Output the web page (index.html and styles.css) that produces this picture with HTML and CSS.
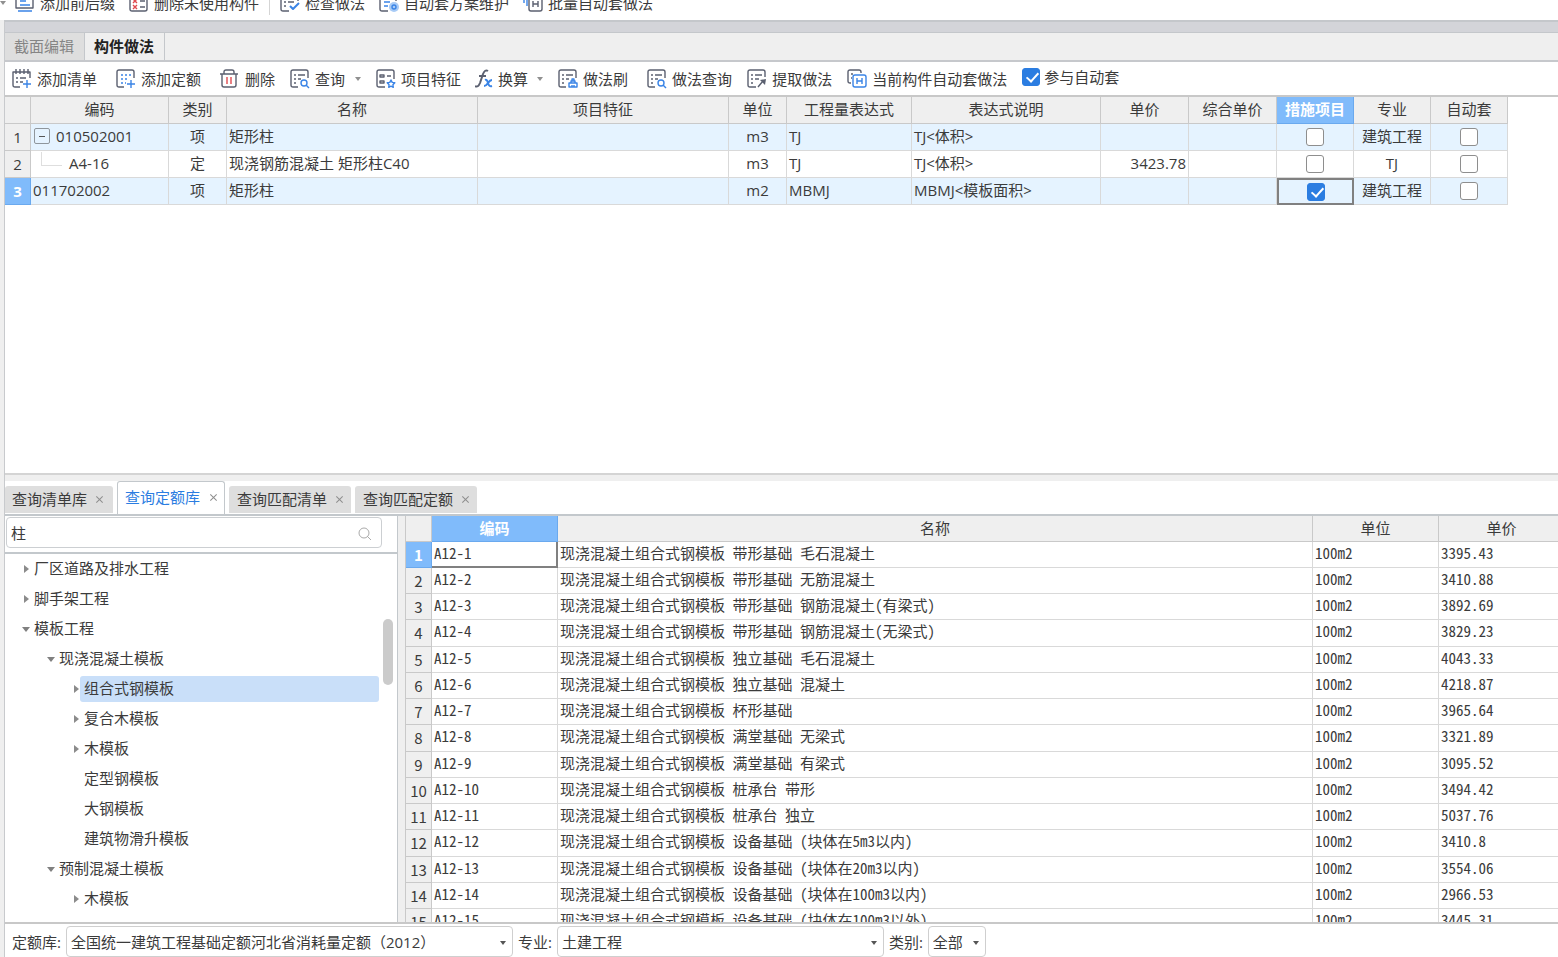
FILE: index.html
```html
<!DOCTYPE html>
<html lang="zh-CN">
<head>
<meta charset="utf-8">
<meta name="viewport" content="width=device-width, initial-scale=1">
<title>构件做法</title>
<link rel="stylesheet" href="styles.css">
</head>
<body>
<svg class="sprite" aria-hidden="true">
  <symbol id="i-list-add" viewBox="0 0 20 20"><path class="k" d="M8 18H3q-2 0-2-2V3h17v6M4 0v5M8 0v5M12 0v5M16 0v5M4 9h2M8 9h6M4 13h2M8 13h3"/><path class="b" d="M15 11v8M11 15h8"/></symbol>
  <symbol id="i-quota-add" viewBox="0 0 20 20"><path class="k" d="M8 18H3q-2 0-2-2V3q0-2 2-2h13q2 0 2 2v6"/><path class="b dots" d="M5 6h10M5 10h8M5 14h5"/><path class="b" d="M15 11v8M11 15h8"/></symbol>
  <symbol id="i-trash" viewBox="0 0 20 20"><path class="k" d="M0 5h18M4 5V3q0-2 2-2h6q2 0 2 2v2M2 5v11q0 2 2 2h10q2 0 2-2V5"/><path class="r" d="M7 8v7M11 8v7"/></symbol>
  <symbol id="i-query" viewBox="0 0 20 20"><path class="k" d="M8 18H3q-2 0-2-2V3q0-2 2-2h13q2 0 2 2v6M4 6h2M8 6h7M4 10h2M8 10h3M4 14h2"/><circle class="b" cx="14" cy="14" r="3"/><path class="b" d="m16 16 3 3"/></symbol>
  <symbol id="i-feature" viewBox="0 0 20 20"><path class="k" d="M9 18H3q-2 0-2-2V3q0-2 2-2h13q2 0 2 2v7M4 6h4v2H4zM4 12h4v2H4zM11 7h4"/><path class="b" d="m15 11 1.200 2.400 2.600.4-1.900 1.900.4 2.600-2.300-1.200-2.300 1.200.4-2.600-1.900-1.900 2.600-.4z"/></symbol>
  <symbol id="i-fx" viewBox="0 0 20 20"><path class="k thick" d="M0 17q3 2 5-3l3-9q2-5 5-3M4 7h7"/><path class="b thick" d="M10 11q2-1 3 3t4 3M17 11q-2 0-4 3t-4 3"/></symbol>
  <symbol id="i-brush" viewBox="0 0 20 20"><path class="k" d="M8 18H3q-2 0-2-2V3q0-2 2-2h13q2 0 2 2v6M4 6h2M8 6h7M4 10h2M8 10h3M4 14h2"/><path class="b" d="M11 18v-4h8v4zM13 14v-2h4v2M14 12v-2h2v2M14 18v-2M16 18v-2"/></symbol>
  <symbol id="i-extract" viewBox="0 0 20 20"><path class="k" d="M9 18H3q-2 0-2-2V3q0-2 2-2h13q2 0 2 2v5M4 6h2M8 6h7M4 10h2M8 10h4M4 14h2M11 18l5-6"/><path class="kf" d="m13 11 6-1-1 6z"/></symbol>
  <symbol id="i-auto" viewBox="0 0 20 20"><path class="k" d="M4 14H3q-2 0-2-2V3q0-2 2-2h9q2 0 2 2v1M4 5h2M4 9h1"/><rect class="b" x="6" y="6" width="13" height="12" rx="2"/><path class="b" d="M10 9v6M15 9v6M10 12h5"/></symbol>
  <symbol id="i-prefix" viewBox="0 0 20 20"><path class="k" d="M1 1h17v14H1z"/><path class="b" d="M5 8h6M5 12h10M3 18h14"/></symbol>
  <symbol id="i-unused" viewBox="0 0 20 20"><path class="k" d="M3 1h13q2 0 2 2v13q0 2-2 2H3q-2 0-2-2V1M11 8h5M11 14h5"/><path class="r" d="m4 6 4 4m0-4-4 4M4 12l4 4m0-4-4 4"/></symbol>
  <symbol id="i-check" viewBox="0 0 20 20"><path class="k" d="M9 18H3q-2 0-2-2V1h17v7M4 9h2M8 9h6M4 13h2"/><path class="b thick" d="m10 13 3 3 6-6"/></symbol>
  <symbol id="i-scheme" viewBox="0 0 20 20"><path class="k" d="M9 18H3q-2 0-2-2V1h16v7"/><path class="b" d="M5 6h8M5 9h6M5 13h4"/><circle class="bf" cx="15" cy="14" r="5"/><circle class="b" cx="15" cy="14" r="2"/></symbol>
  <symbol id="i-batch" viewBox="0 0 20 20"><path class="b" d="M1 1v9M4 1v12"/><rect class="k" x="6" y="4" width="13" height="14" rx="2"/><path class="k" d="M10 8v6M15 8v6M10 11h5"/></symbol>
</svg>

<div class="app">
  <header class="ribbon">
    <i class="caret"></i>
    <button class="tool"><svg><use href="#i-prefix"/></svg>添加前后缀</button>
    <button class="tool"><svg><use href="#i-unused"/></svg>删除未使用构件</button>
    <i class="divider"></i>
    <button class="tool"><svg><use href="#i-check"/></svg>检查做法</button>
    <button class="tool"><svg><use href="#i-scheme"/></svg>自动套方案维护</button>
    <button class="tool"><svg><use href="#i-batch"/></svg>批量自动套做法</button>
  </header>

  <main class="workspace">
    <div class="band"></div>
    <nav class="view-tabs">
      <button class="view-tab">截面编辑</button>
      <button class="view-tab active">构件做法</button>
    </nav>
    <div class="toolbar">
      <button class="tool roomy"><svg><use href="#i-list-add"/></svg>添加清单</button>
      <button class="tool roomy"><svg><use href="#i-quota-add"/></svg>添加定额</button>
      <button class="tool"><svg><use href="#i-trash"/></svg>删除</button>
      <button class="tool"><svg><use href="#i-query"/></svg>查询<i class="caret"></i></button>
      <button class="tool"><svg><use href="#i-feature"/></svg>项目特征</button>
      <button class="tool fx"><svg><use href="#i-fx"/></svg>换算<i class="caret"></i></button>
      <button class="tool roomy"><svg><use href="#i-brush"/></svg>做法刷</button>
      <button class="tool"><svg><use href="#i-query"/></svg>做法查询</button>
      <button class="tool"><svg><use href="#i-extract"/></svg>提取做法</button>
      <button class="tool"><svg><use href="#i-auto"/></svg>当前构件自动套做法</button>
      <label class="join"><input type="checkbox" class="check" checked>参与自动套</label>
    </div>

    <section class="items">
      <table class="grid items-grid">
        <colgroup><col class="w-no"><col class="w-code"><col class="w-kind"><col class="w-name"><col class="w-name"><col class="w-kind"><col class="w-expr"><col class="w-desc"><col class="w-price"><col class="w-price"><col class="w-flag"><col class="w-flag"><col class="w-flag"></colgroup>
        <thead><tr><th></th><th>编码</th><th>类别</th><th>名称</th><th>项目特征</th><th>单位</th><th>工程量表达式</th><th>表达式说明</th><th>单价</th><th>综合单价</th><th class="hot">措施项目</th><th>专业</th><th>自动套</th></tr></thead>
        <tbody>
          <tr class="tint"><th>1</th><td><div class="node"><button class="fold" aria-label="折叠"></button>010502001</div></td><td class="mid">项</td><td>矩形柱</td><td></td><td class="mid">m3</td><td>TJ</td><td>TJ&lt;体积&gt;</td><td></td><td></td><td class="mid"><input type="checkbox" class="check" aria-label="措施项目 1"></td><td class="mid">建筑工程</td><td class="mid"><input type="checkbox" class="check" aria-label="自动套 1"></td></tr>
          <tr><th>2</th><td><div class="node"><i class="branch"></i>A4-16</div></td><td class="mid">定</td><td>现浇钢筋混凝土 矩形柱C40</td><td></td><td class="mid">m3</td><td>TJ</td><td>TJ&lt;体积&gt;</td><td class="num">3423.78</td><td></td><td class="mid"><input type="checkbox" class="check" aria-label="措施项目 2"></td><td class="mid">TJ</td><td class="mid"><input type="checkbox" class="check" aria-label="自动套 2"></td></tr>
          <tr class="tint"><th class="hot">3</th><td>011702002</td><td class="mid">项</td><td>矩形柱</td><td></td><td class="mid">m2</td><td>MBMJ</td><td>MBMJ&lt;模板面积&gt;</td><td></td><td></td><td class="mid focus"><input type="checkbox" class="check" checked aria-label="措施项目 3"></td><td class="mid">建筑工程</td><td class="mid"><input type="checkbox" class="check" aria-label="自动套 3"></td></tr>
        </tbody>
      </table>
    </section>

    <nav class="query-tabs">
      <div class="query-tab"><button>查询清单库</button><button class="close" aria-label="关闭"></button></div>
      <div class="query-tab active"><button>查询定额库</button><button class="close" aria-label="关闭"></button></div>
      <div class="query-tab"><button>查询匹配清单</button><button class="close" aria-label="关闭"></button></div>
      <div class="query-tab"><button>查询匹配定额</button><button class="close" aria-label="关闭"></button></div>
    </nav>

    <section class="library">
      <aside class="side">
        <div class="search">
          <input type="text" value="柱" aria-label="搜索">
          <svg viewBox="0 0 14 14"><circle cx="6" cy="6" r="5"/><path d="m9 9 4 4"/></svg>
        </div>
        <div class="tree-area">
          <ul class="tree">
            <li><i class="twist"></i><span>厂区道路及排水工程</span></li>
            <li><i class="twist"></i><span>脚手架工程</span></li>
            <li><i class="twist open"></i><span>模板工程</span></li>
            <li class="l2"><i class="twist open"></i><span>现浇混凝土模板</span></li>
            <li class="l3 chosen"><i class="twist"></i><span>组合式钢模板</span></li>
            <li class="l3"><i class="twist"></i><span>复合木模板</span></li>
            <li class="l3"><i class="twist"></i><span>木模板</span></li>
            <li class="l3"><i class="twist none"></i><span>定型钢模板</span></li>
            <li class="l3"><i class="twist none"></i><span>大钢模板</span></li>
            <li class="l3"><i class="twist none"></i><span>建筑物滑升模板</span></li>
            <li class="l2"><i class="twist open"></i><span>预制混凝土模板</span></li>
            <li class="l3"><i class="twist"></i><span>木模板</span></li>
          </ul>
          <div class="track"><div class="thumb"></div></div>
        </div>
      </aside>
      <div class="quota">
        <table class="grid quota-grid">
          <colgroup><col class="w-row"><col class="w-unit"><col><col class="w-unit"><col class="w-unit"></colgroup>
          <thead><tr><th></th><th class="hot">编码</th><th>名称</th><th>单位</th><th>单价</th></tr></thead>
          <tbody>
            <tr><th class="hot">1</th><td class="focus">A12-1</td><td>现浇混凝土组合式钢模板 带形基础 毛石混凝土</td><td>100m2</td><td>3395.43</td></tr>
            <tr><th>2</th><td>A12-2</td><td>现浇混凝土组合式钢模板 带形基础 无筋混凝土</td><td>100m2</td><td>3410.88</td></tr>
            <tr><th>3</th><td>A12-3</td><td>现浇混凝土组合式钢模板 带形基础 钢筋混凝土(有梁式)</td><td>100m2</td><td>3892.69</td></tr>
            <tr><th>4</th><td>A12-4</td><td>现浇混凝土组合式钢模板 带形基础 钢筋混凝土(无梁式)</td><td>100m2</td><td>3829.23</td></tr>
            <tr><th>5</th><td>A12-5</td><td>现浇混凝土组合式钢模板 独立基础 毛石混凝土</td><td>100m2</td><td>4043.33</td></tr>
            <tr><th>6</th><td>A12-6</td><td>现浇混凝土组合式钢模板 独立基础 混凝土</td><td>100m2</td><td>4218.87</td></tr>
            <tr><th>7</th><td>A12-7</td><td>现浇混凝土组合式钢模板 杯形基础</td><td>100m2</td><td>3965.64</td></tr>
            <tr><th>8</th><td>A12-8</td><td>现浇混凝土组合式钢模板 满堂基础 无梁式</td><td>100m2</td><td>3321.89</td></tr>
            <tr><th>9</th><td>A12-9</td><td>现浇混凝土组合式钢模板 满堂基础 有梁式</td><td>100m2</td><td>3095.52</td></tr>
            <tr><th>10</th><td>A12-10</td><td>现浇混凝土组合式钢模板 桩承台 带形</td><td>100m2</td><td>3494.42</td></tr>
            <tr><th>11</th><td>A12-11</td><td>现浇混凝土组合式钢模板 桩承台 独立</td><td>100m2</td><td>5037.76</td></tr>
            <tr><th>12</th><td>A12-12</td><td>现浇混凝土组合式钢模板 设备基础 (块体在5m3以内)</td><td>100m2</td><td>3410.8</td></tr>
            <tr><th>13</th><td>A12-13</td><td>现浇混凝土组合式钢模板 设备基础 (块体在20m3以内)</td><td>100m2</td><td>3554.06</td></tr>
            <tr><th>14</th><td>A12-14</td><td>现浇混凝土组合式钢模板 设备基础 (块体在100m3以内)</td><td>100m2</td><td>2966.53</td></tr>
            <tr><th>15</th><td>A12-15</td><td>现浇混凝土组合式钢模板 设备基础 (块体在100m3以外)</td><td>100m2</td><td>3445.31</td></tr>
          </tbody>
        </table>
      </div>
    </section>

    <footer class="filters">
      <label for="lib">定额库:</label>
      <div class="pick pick-lib"><select id="lib"><option>全国统一建筑工程基础定额河北省消耗量定额（2012）</option></select></div>
      <label for="major">专业:</label>
      <div class="pick pick-major"><select id="major"><option>土建工程</option></select></div>
      <label for="kind">类别:</label>
      <div class="pick pick-kind"><select id="kind"><option>全部</option></select></div>
    </footer>
  </main>
</div>
</body>
</html>
```

FILE: styles.css
```css
* { box-sizing: border-box; }
body { margin: 0; background: #fff; color: #3b3b3b; font: 15px/20px "Open Sans", "Noto Sans CJK SC", sans-serif; }
button, input, select { font: inherit; color: inherit; margin: 0; padding: 0; border: 0; background: none; }
i { font-style: normal; flex: none; }
.sprite { position: absolute; width: 0; height: 0; }

.k, .b, .r { fill: none; stroke-width: 1.400; stroke-linejoin: round; }
.k { stroke: #5b6070; }
.b { stroke: #3a84e6; }
.r { stroke: #e04a50; }
.kf { fill: #5b6070; }
.bf { fill: #a8cbf6; }
.thick { stroke-width: 2; }
.dots { stroke-dasharray: 2 2; }

.app { display: flex; flex-direction: column; height: 100vh; overflow: hidden; }

.ribbon { flex: none; display: flex; align-items: flex-end; gap: 14px; height: 20px; padding-bottom: 5px; overflow: hidden; }
.ribbon .caret { margin: 0 -5px 10px 0; }
.divider { width: 1px; height: 24px; background: #d5d5d5; margin: 0 -4px; }

.tool { flex: none; display: flex; align-items: center; gap: 5px; height: 24px; white-space: nowrap; }
.tool svg { width: 20px; height: 20px; flex: none; }
.caret { border: 3px solid transparent; border-top: 4px solid #909090; border-bottom: 0; width: 6px; height: 4px; }

.workspace { flex: 1; min-height: 0; display: flex; flex-direction: column; margin-left: 4px; border-left: 1px solid #c8cacd; border-top: 2px solid #c4c7cb; box-shadow: -4px 0 #efefef; }
.band { flex: none; height: 11px; background: #d3d4d9; border-bottom: 1px solid #c4c7cb; }
.view-tabs { flex: none; display: flex; height: 29px; background: #efefef; border-bottom: 2px solid #c6c8cc; }
.view-tab { padding: 0 10px 2px 9px; border-right: 1px solid #c4c7cb; }
.view-tab:first-child { background: #dedede; color: #858585; }
.view-tab.active { font-weight: 700; color: #222; }

.toolbar { flex: none; display: flex; align-items: center; gap: 15px; height: 35px; padding-left: 7px; border-bottom: 2px solid #c8c8c8; }
.toolbar .roomy { margin-right: 4px; }
.toolbar .caret { margin-left: 5px; }
.toolbar .fx { gap: 3px; margin-left: -1px; }
.toolbar .fx .caret { margin-left: 6px; }
.join { display: flex; align-items: center; gap: 4px; padding-bottom: 4px; white-space: nowrap; }

.check { appearance: none; display: block; width: 18px; height: 18px; margin: 0 auto; border: 1px solid #8e8e8e; border-radius: 3px; background: #fff; }
.check:checked { background: #2b7de1; border-color: #2b7de1; }
.check:checked::before { content: ""; display: block; width: 5px; height: 10px; margin: 1px 0 0 6px; border: solid #fff; border-width: 0 2px 2px 0; transform: rotate(42deg); }

.grid { table-layout: fixed; border-collapse: separate; border-spacing: 0; }
.grid th, .grid td { padding: 0 3px; border: solid #d9d9d9; border-width: 0 1px 1px 0; text-align: left; font-weight: 400; white-space: nowrap; overflow: hidden; }
.grid th { background: #efefef; border-color: #c9c9c9; text-align: center; padding: 0; }
.grid thead th { padding-bottom: 2px; }
.grid .hot { background: #80bbfb; border-color: #6aa9ee; color: #fff; font-weight: 700; }
.grid .mid { text-align: center; }
.grid .num { text-align: right; }

.items { flex: none; height: 378px; border-bottom: 2px solid #d4d4d4; overflow: hidden; }
.items-grid { width: 1503px; }
.items-grid tr { height: 27px; }
.items-grid td { padding: 0 2px 2px; }
.items-grid td:has(.check) { padding-bottom: 0; }
.items-grid .tint td { background: #e5f3ff; }
.items-grid .focus { border: 2px solid #808080; }
.w-no { width: 26px; } .w-code { width: 138px; } .w-kind { width: 58px; } .w-name { width: 251px; }
.w-expr { width: 125px; } .w-desc { width: 189px; } .w-price { width: 88px; } .w-flag { width: 77px; }
.node { display: flex; align-items: center; gap: 6px; }
.fold { width: 16px; height: 16px; margin-left: 1px; border: 1px solid #8f969c; border-radius: 2px; padding: 0 4px; }
.fold::before { content: ""; display: block; height: 1px; background: #555; }
.branch { width: 21px; height: 14px; margin: 0 1px 8px 8px; border: solid #dedede; border-width: 0 0 1px 1px; }

.query-tabs { flex: none; display: flex; align-items: flex-end; gap: 4px; height: 41px; border-top: 6px solid #efefef; border-bottom: 2px solid #c3c8cc; }
.query-tab { display: flex; align-items: center; gap: 8px; height: 27px; margin-bottom: 1px; padding: 0 8px 2px; background: #dedede; border-radius: 3px 3px 0 0; }
.query-tab:first-child { padding: 0 10px 2px 7px; }
.query-tab.active { gap: 9px; height: 33px; margin-bottom: 0; padding: 0 7px 2px; background: #fff; color: #2b7de1; border: 1px solid #c3c8cc; border-bottom: 0; }
.close { position: relative; width: 8px; height: 8px; }
.close::before, .close::after { content: ""; position: absolute; left: 4px; top: 0; width: 1px; height: 9px; background: #8d8d8d; transform: rotate(45deg); }
.close::after { transform: rotate(-45deg); }

.library { flex: 1; min-height: 0; display: flex; gap: 7px; background: #efefef; }
.side { flex: none; width: 393px; display: flex; flex-direction: column; background: #fff; border-right: 1px solid #c3c8cc; }
.search { flex: none; display: flex; height: 38px; padding: 1px 15px 4px 1px; border-bottom: 2px solid #c3c8cc; position: relative; }
.search input { flex: 1; min-width: 0; padding: 0 30px 0 4px; border: 1px solid #cccfd2; border-radius: 4px; }
.search svg { position: absolute; right: 25px; top: 11px; width: 14px; height: 14px; fill: none; stroke: #aaa; stroke-width: 1; }
.tree-area { flex: 1; min-height: 0; display: flex; overflow: hidden; }
.tree { flex: 1; list-style: none; margin: 0; padding: 0; }
.tree li { display: flex; align-items: center; height: 30px; padding-left: 18px; }
.tree .l2 { padding-left: 43px; }
.tree .l3 { padding-left: 68px; }
.tree span { flex: 1; padding: 2px 4px 4px; border-radius: 3px; }
.tree .chosen span { background: #c9dff9; }
.twist { width: 6px; height: 8px; margin-left: 1px; border: solid transparent; border-width: 4px 0 4px 5px; border-left-color: #8b8b8b; }
.twist.open { width: 8px; height: 5px; margin-left: -1px; border: 4px solid transparent; border-top: 5px solid #808080; border-bottom: 0; }
.twist.none { border-color: transparent; }
.track { flex: none; width: 18px; padding: 65px 4px 0; }
.thumb { height: 66px; border-radius: 5px; background: #cbcbcb; }

.quota { flex: 1; min-width: 0; overflow: hidden; background: #fff; }
.quota-grid { width: calc(100% + 7px); border-left: 1px solid #c9c9c9; font-family: "Noto Sans CJK SC", sans-serif; }
.quota-grid tr { height: 26px; }
.quota-grid tbody tr:nth-child(4n) { height: 27px; }
.quota-grid td { font-feature-settings: "hwid"; line-height: 18px; padding: 0 2px 4px; }
.quota-grid .focus { border: solid #808080; border-width: 0 2px 2px 0; padding-bottom: 3px; }
.w-row { width: 26px; } .w-unit { width: 126px; }

.filters { flex: none; display: flex; align-items: center; gap: 5px; height: 35px; padding: 2px 7px 0; border-top: 2px solid #c8c8c8; white-space: nowrap; }
.filters label { line-height: 30px; }
.pick { position: relative; height: 31px; }
.pick::after { content: ""; position: absolute; right: 7px; top: 15px; border: 3px solid transparent; border-top: 4px solid #555; border-bottom: 0; pointer-events: none; }
.pick select { appearance: none; width: 100%; height: 100%; padding: 0 4px; border: 1px solid #cfcfcf; border-radius: 4px; }
.pick-lib { width: 447px; } .pick-major { width: 327px; } .pick-kind { width: 58px; }
```
